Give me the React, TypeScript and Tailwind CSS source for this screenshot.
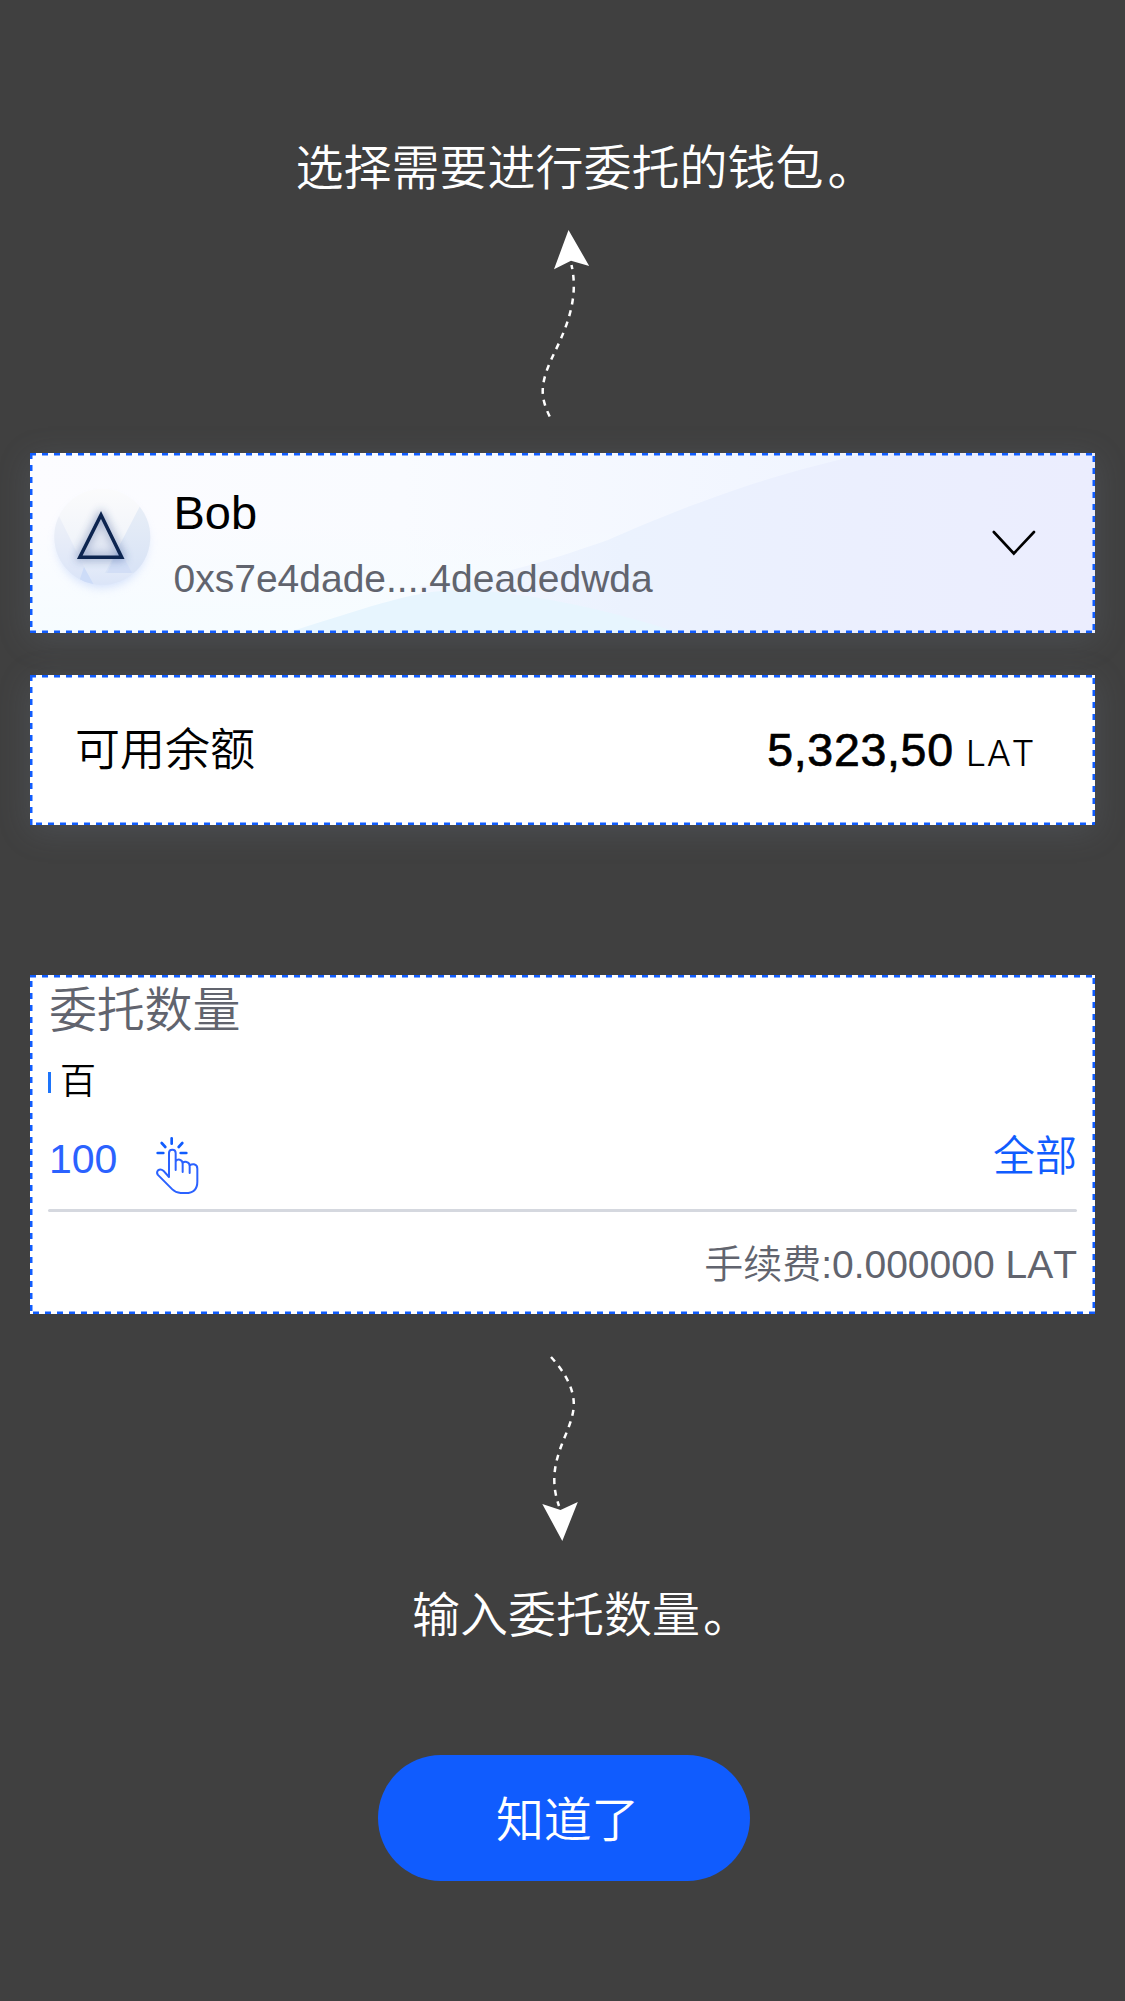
import type { ReactNode } from "react";

function DashedFrame() {
  return (
    <svg className="pointer-events-none absolute inset-0 h-full w-full overflow-hidden" aria-hidden="true">
      <rect width="100%" height="100%" fill="none" stroke="#105cfe" strokeWidth="5" strokeDasharray="6 6" />
    </svg>
  );
}

function Card({ className, children }: { className: string; children: ReactNode }) {
  return (
    <section className={`relative w-[1065px] bg-white ${className}`}>
      {children}
      <DashedFrame />
    </section>
  );
}

function ArrowUp() {
  return (
    <svg className="h-[200px] w-[60px]" viewBox="535 220 60 200" aria-hidden="true">
      <path d="M568.5 230 L589.2 266 L571 260.7 L554 269.3Z" fill="#fff" />
      <path
        d="M549.7 416.5C546 409 542.7 400 542.7 391.3C542.7 378 549 364 554.5 352.5C562 337 573.8 312 573.8 286C573.8 278 573 272 571.5 265"
        fill="none"
        stroke="#fff"
        strokeWidth="2.5"
        strokeDasharray="6 5.85"
      />
    </svg>
  );
}

function ArrowDown() {
  return (
    <svg className="h-[200px] w-[60px]" viewBox="535 1350 60 200" aria-hidden="true">
      <path d="M542.3 1504L560.5 1510L577.8 1502L562.3 1541Z" fill="#fff" />
      <path
        d="M551 1357C563 1370 573.8 1387 573.8 1404C573.8 1418 566 1433 562 1444C557 1457 554.3 1468 554.3 1480C554.3 1489 556 1497 559 1506"
        fill="none"
        stroke="#fff"
        strokeWidth="2.5"
        strokeDasharray="6 5.85"
      />
    </svg>
  );
}

function Waves() {
  return (
    <svg className="absolute inset-0 h-full w-full" viewBox="0 0 1065 180" aria-hidden="true">
      <defs>
        <linearGradient id="base" x1="0" x2="1" y1="0" y2="0">
          <stop offset="0" stopColor="#fcfcff" />
          <stop offset=".35" stopColor="#f9fbff" />
          <stop offset=".8" stopColor="#eff4ff" />
        </linearGradient>
        <linearGradient id="mist" x1="0" x2="0" y1="0" y2="1">
          <stop offset=".4" stopColor="#f5fcff" stopOpacity="0" />
          <stop offset="1" stopColor="#f6fcff" />
        </linearGradient>
        <linearGradient id="wave" x1="0" x2="1" y1="0" y2="0">
          <stop offset="0" stopColor="#f3f7ff" />
          <stop offset=".3" stopColor="#ebf2fe" />
          <stop offset=".65" stopColor="#ebeffe" />
          <stop offset="1" stopColor="#ebedfe" />
        </linearGradient>
      </defs>
      <rect width="1065" height="180" fill="url(#base)" />
      <rect width="700" height="180" fill="url(#mist)" />
      <path d="M390 133C460 127 520 107 578 87C640 60 730 22 845 -1H1065V180H390Z" fill="url(#wave)" />
      <path d="M255 180C330 158 380 137 430 137C500 138 590 160 650 180Z" fill="#e7f5fe" />
    </svg>
  );
}

function Avatar() {
  return (
    <svg className="h-[120px] w-[120px]" viewBox="45 480 120 120" aria-hidden="true">
      <defs>
        <clipPath id="disc">
          <circle cx="102.3" cy="536.8" r="48" />
        </clipPath>
        <linearGradient id="face" x1="0" x2="0" y1="0" y2="1">
          <stop offset="0" stopColor="#fbfbfc" />
          <stop offset=".5" stopColor="#f2f5fa" />
          <stop offset="1" stopColor="#dbe5f8" />
        </linearGradient>
        <linearGradient id="facet" x1="0" x2="0" y1="0" y2="1">
          <stop offset="0" stopColor="#e9eff7" />
          <stop offset="1" stopColor="#d8e3f6" />
        </linearGradient>
        <linearGradient id="facetLeft" x1="0" x2="0" y1="0" y2="1">
          <stop offset="0" stopColor="#eef1f8" />
          <stop offset="1" stopColor="#dae4f8" />
        </linearGradient>
        <filter id="soft" x="-30%" y="-30%" width="160%" height="160%">
          <feGaussianBlur stdDeviation="5" />
        </filter>
      </defs>
      <circle cx="102.3" cy="543" r="45" fill="#b9cdf8" opacity=".55" filter="url(#soft)" />
      <circle cx="102.3" cy="536.8" r="48" fill="url(#face)" />
      <g clipPath="url(#disc)">
        <path d="M59 516L93 585H45V516Z" fill="url(#facetLeft)" />
        <path d="M140 506L105 573L134 573L155 560V500Z" fill="url(#facet)" />
        <path d="M84 567L78 585H94Z" fill="#cddcf8" />
        <path d="M107 573L119 548L132 573Z" fill="#d2def6" />
      </g>
      <path d="M101 515L121.7 557.3H79.8Z" fill="#7d93c2" fillOpacity=".2" stroke="#2a4a8a" strokeWidth="5" opacity=".55" filter="url(#soft)" />
      <path d="M101 515L121.7 557.3H79.8Z" fill="none" stroke="#0d2550" strokeWidth="3.5" />
    </svg>
  );
}

function TapIcon() {
  return (
    <svg
      className="h-[76px] w-[64px]"
      viewBox="0 0 192 228"
      fill="none"
      stroke="#2b62ff"
      strokeWidth="6"
      strokeLinecap="round"
      strokeLinejoin="round"
      aria-hidden="true"
    >
      <path d="M80 40V56M38 84H55M107 84H124M50 54L61 66M112 54L101 66" stroke="#105cfe" strokeWidth="8" />
      <path d="M92 135V84Q92 74 82 74Q72 74 72 84V156L55 137Q47 130 39 136Q34 141 38 149L82 193Q92 203 107 204H122Q157 204 157 170V131Q157 120 147 118Q140 117 134 121M92 109Q96 103 104 104Q113 106 113 116V141M113 114Q118 109 125 111Q134 113 134 123V144" />
    </svg>
  );
}

export default function App() {
  return (
    <main className="flex h-[2001px] w-[1125px] flex-col overflow-hidden bg-[#404040] pt-[136px] font-['Liberation_Sans','Noto_Sans_CJK_SC',sans-serif] font-[350] text-black">
      <h1 className="pl-[295.5px] text-[48px] leading-[66px] font-[350] whitespace-nowrap text-white">
        选择需要进行委托的钱包<span className="ml-[4px]">。</span>
      </h1>
      <div className="mt-[18px] ml-[535px] h-[233px]">
        <ArrowUp />
      </div>

      <Card className="ml-[30px] h-[180px] shrink-0 shadow-[0_6px_30px_rgba(120,130,150,0.22)]">
        <Waves />
        <div className="relative flex h-full pl-[15px]">
          <div className="pt-[27px]">
            <Avatar />
          </div>
          <div className="flex-1 pt-[27px] pl-[8.5px] leading-[66px]">
            <p className="text-[47px]">Bob</p>
            <p className="text-[39px] text-[#61646e]">0xs7e4dade....4deadedwda</p>
          </div>
          <svg className="mt-[75px] mr-[57px] h-[30px] w-[48px]" viewBox="990 528 48 30" fill="none" aria-hidden="true">
            <path d="M993.8 532L1013.8 553.5L1034 532" stroke="#000" strokeWidth="2.6" strokeLinecap="round" />
          </svg>
        </div>
      </Card>

      <Card className="mt-[42px] ml-[30px] h-[150px] shrink-0 shadow-[0_6px_30px_rgba(120,130,150,0.22)]">
        <div className="flex h-full items-center justify-between pr-[60px] pl-[45px]">
          <span className="mt-[2px] text-[45px] leading-[60px]">可用余额</span>
          <span className="mt-[2px] flex items-baseline gap-[12px] leading-[60px]">
            <span className="text-[46.5px] tracking-[0.7px] [-webkit-text-stroke:0.7px_#000]">5,323,50</span>
            <span className="font-['Inter',sans-serif] text-[36px] font-[320] tracking-[0.6px] [font-kerning:none]">LAT</span>
          </span>
        </div>
      </Card>

      <Card className="mt-[150px] ml-[30px] h-[339px] shrink-0">
        <div className="flex flex-col pr-[18px] pl-[18px]">
          <h2 className="mt-[6px] pl-px text-[48px] leading-[60px] font-[350] tracking-[-0.2px] text-[#61646e]">委托数量</h2>
          <div className="mt-[21px] flex h-[40px] items-center gap-[9px]">
            <span className="h-[21px] w-[3px] bg-[#1d74fa]" />
            <span className="text-[36px] leading-[40px]">百</span>
          </div>
          <div className="mt-[23px] flex h-[84px] justify-between">
            <div className="flex">
              <span className="w-[97px] pt-[4px] pl-px text-[41px] leading-[60px] text-[#2b62ff]">100</span>
              <TapIcon />
            </div>
            <span className="pt-[2px] text-[42px] leading-[60px] text-[#105cfe]">全部</span>
          </div>
          <div className="h-[3px] rounded-full bg-[#d5d8df]" />
          <p className="mt-[23px] text-right text-[39px] leading-[60px] text-[#61646e] [font-kerning:none]">手续费:0.000000 LAT</p>
        </div>
      </Card>

      <div className="mt-[36px] ml-[535px] h-[200px]">
        <ArrowDown />
      </div>
      <p className="mt-[36px] pl-[412px] text-[48px] leading-[60px] text-white">
        输入委托数量<span className="ml-[3px]">。</span>
      </p>
      <button className="mt-[109px] ml-[378px] h-[126px] w-[372px] shrink-0 rounded-full bg-[#105cfe] pt-[5px] pl-[7px] text-[48px] leading-[60px] font-[350] tracking-[-0.3px] text-white">
        知道了
      </button>
    </main>
  );
}
